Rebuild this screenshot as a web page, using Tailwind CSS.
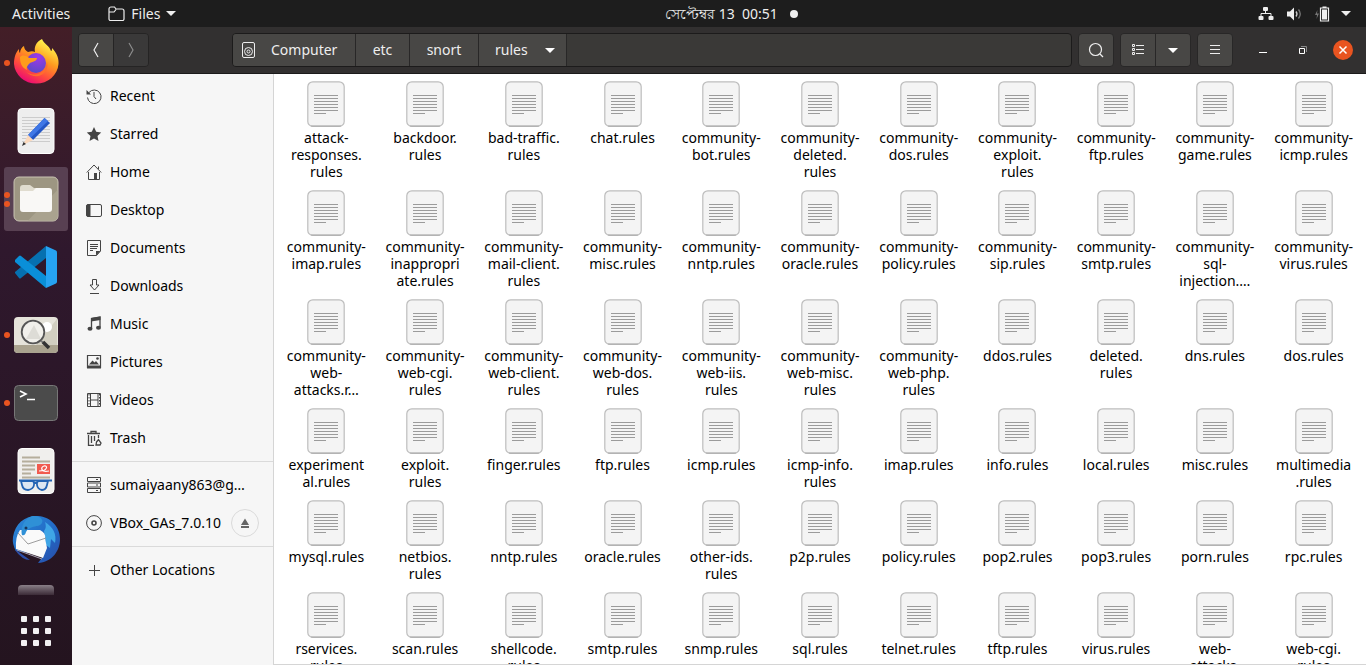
<!DOCTYPE html>
<html lang="en"><head><meta charset="utf-8"><title>Files</title>
<script src="https://cdn.jsdelivr.net/npm/@tailwindcss/browser@4"></script></head>
<body class="flex h-screen flex-col overflow-hidden bg-[#1d1d1d] font-['Noto_Sans',sans-serif] text-sm text-black">
<svg class="hidden">
  <symbol id="doc" viewBox="0 0 38 46"><rect x=".8" y=".8" width="36.4" height="44.6" rx="5" fill="#f4f4f4" stroke="#bdbdbd" stroke-width="1.2"/><path d="M4 45H34" stroke="#a9a9a9" stroke-width="1"/><path d="M7 14.5H31M7 17.5H31M7 20.5H31M7 23.5H31M7 26.5H31M7 29.5H31M7 32.5H19" stroke="#9b9b9b"/></symbol>
</svg>
<header class="flex h-[27px] shrink-0 items-center text-[#eeeeee]">
  <div class="flex flex-1 items-center">
    <button class="ml-3 leading-5">Activities</button>
    <button class="ml-[37px] flex items-center leading-5"><svg class="mr-[6px] size-[18px]" viewBox="0 0 18 18" fill="none" stroke="#eee" stroke-width="1.2"><path d="M2 14V4a2 2 0 0 1 2-2h3.500l1.500 2h6a2 2 0 0 1 2 2v8a1.500 1.500 0 0 1-1.500 1.500h-12A1.500 1.500 0 0 1 2 14ZM2 7h5l2-2.500"/></svg>Files<svg class="ml-[6px] h-[5px] w-[10px]" viewBox="0 0 10 5"><path d="M0 0h10L5 5Z" fill="#eee"/></svg></button>
  </div>
  <button class="ml-[112px] flex items-center leading-5"><span>সেপ্টেম্বর 13&nbsp; 00:51</span><span class="ml-[12px] size-2 rounded-full bg-[#eeeeee]"></span></button>
  <button class="flex flex-1 items-center justify-end pr-[15px]" aria-label="System menu">
    <svg class="mr-3 size-4" viewBox="0 0 16 16" fill="#eee"><rect x="5" y="1" width="5" height="4" rx="1"/><rect x=".5" y="10" width="5" height="4" rx="1"/><rect x="10.500" y="10" width="5" height="4" rx="1"/><path d="M7.500 5v3M3 10V7.500h10V10" fill="none" stroke="#eee"/></svg>
    <svg class="mr-3 size-4" viewBox="0 0 16 16"><path d="M1 5.500h3L8 1.500v13L4 10.500H1Z" fill="#eee"/><path d="M10 5.500q2 2.500 0 5" fill="none" stroke="#ccc" stroke-width="1.300"/><path d="M12.500 3.500q3.500 4.500 0 9" fill="none" stroke="#777" stroke-width="1.300"/></svg>
    <svg class="mr-[11px] size-4" viewBox="0 0 16 16"><path d="M3.500 4 1 9h2l-.5 4L5 7.500H3Z" fill="#777"/><path d="M6.500 2h8v13h-8zM8.500 1h4" fill="none" stroke="#eee" stroke-width="1.200"/><path d="M8 3.500h5v10H8z" fill="#eee"/></svg>
    <svg class="h-[5px] w-[10px]" viewBox="0 0 10 5"><path d="M0 0h10L5 5Z" fill="#eee"/></svg>
  </button>
</header>
<div class="flex min-h-0 flex-1">
  <nav class="flex w-[72px] shrink-0 flex-col items-center gap-1 overflow-hidden bg-linear-to-b from-[#431e27] via-[#2f182d] via-35% to-[#24141f] pt-1" aria-label="Dock">
    <button class="relative grid size-16 shrink-0 place-items-center" aria-label="Firefox"><span class="absolute left-0 size-[6px] rounded-full bg-[#e95420]"></span>
      <svg class="size-12" viewBox="0 0 48 48"><defs><linearGradient id="ff" x1=".8" y1="0" x2=".25" y2="1"><stop offset=".1" stop-color="#fff04a"/><stop offset=".42" stop-color="#ff9a1f"/><stop offset=".7" stop-color="#ff4d3d"/><stop offset="1" stop-color="#e9007c"/></linearGradient><radialGradient id="fp" cx=".6" cy=".2" r=".8"><stop offset="0" stop-color="#a038e8"/><stop offset="1" stop-color="#5b49c8"/></radialGradient></defs><path d="M30 0c2 5 7 6 9 12 1 0 1-2 1-3 5 5 7 11 6.500 16a22.300 21 0 0 1-44.500 0c0-7 2-12 5-15 0 2 0 3 1 4 0-3 2-6 4-7 0 3 2 5 4 6 3-1 5-1 7 0-1-5 1-10 7-13Z" fill="url(#ff)"/><circle cx="24" cy="24" r="10" fill="url(#fp)"/><path d="M8 18c3-3 7-1 9 1h8c0 3-5 4-7 5-2 2-4 4-3 7-6-3-7-8-7-13Z" fill="#ff9c1c"/><path d="M13 32c7 6 20 5 22-9 3 12-11 20-22 9Z" fill="#ff6d2d"/></svg></button>
    <button class="grid size-16 shrink-0 place-items-center" aria-label="Text Editor"><svg class="size-12" viewBox="0 0 48 48"><rect x="6" y="1.500" width="36" height="45" rx="4" fill="#eeeeee" stroke="#fff"/><path d="M10 10.500H38M10 13.500H38M10 16.500H38M10 19.500H38M10 22.500H38M10 25.500H38M10 28.500H38M10 31.500H38M10 34.500H38" stroke="#ccc"/><path d="m16 28 16.500-17 5.500 5-17 17Z" fill="#2457c5"/><path d="m16 28 16.500-17 3.500 3-17.500 17Z" fill="#3f77e6"/><path d="m16 28 5 5-10 5Z" fill="#fbd9bd"/><path d="m11.500 35 2.500 2-4 2Z" fill="#333"/></svg></button>
    <button class="relative grid size-16 shrink-0 place-items-center rounded-[3px] bg-[#584052]" aria-label="Files"><span class="absolute left-0 flex flex-col gap-[3px]"><span class="size-[6px] rounded-full bg-[#e95420]"></span><span class="size-[6px] rounded-full bg-[#e95420]"></span></span><svg class="size-12" viewBox="0 0 48 48"><rect x="2" y="2" width="44" height="44" rx="5" fill="#9d9682" stroke="#c9c3b2"/><path d="M45.500 15v26a4.500 4.500 0 0 1-4.500 4.500H16Z" fill="#aaa38f"/><path d="M8 13q0-3 3-3h7l4 3h8v10H8Z" fill="#e0dccf"/><path d="M8 16h13l3-3h13q3 0 3 3v18q0 3-3 3H11q-3 0-3-3Z" fill="#f9f8f6"/></svg></button>
    <button class="grid size-16 shrink-0 place-items-center" aria-label="Visual Studio Code"><svg class="size-12" viewBox="0 0 48 48"><path d="m3 30 4 5q1 1 2 0L34 15V3L3 29Z" fill="#0670b0"/><path d="m3 17 4-4q1-1 2 0l25 20v12L3 19Z" fill="#0a8fd8"/><path d="m34 3 10 4.500q1 .5 1 2v29q0 1.500-1 2L34 45Z" fill="#26a3f2"/></svg></button>
    <button class="relative grid size-16 shrink-0 place-items-center" aria-label="Image Viewer"><span class="absolute left-0 size-[6px] rounded-full bg-[#e95420]"></span><svg class="size-12" viewBox="0 0 48 48"><rect x="2" y="6" width="44" height="36" rx="4" fill="#e5e3da"/><path d="m24 34 21-26v26Z" fill="#d1cec0"/><circle cx="35" cy="16" r="5" fill="#fff"/><path d="M2 34h44v4a4 4 0 0 1-4 4H6a4 4 0 0 1-4-4Z" fill="#aaa38f"/><circle cx="21" cy="21" r="11.300" fill="#f4f4f0" fill-opacity=".75" stroke="#555" stroke-width="1.800"/><path d="m14 28 8-14 7 14Z" fill="#dddcd6"/><path d="m29 30 3 2" stroke="#777" stroke-width="2"/><path d="m31 31 6 6" stroke="#333" stroke-width="3.500"/></svg></button>
    <button class="relative grid size-16 shrink-0 place-items-center" aria-label="Terminal"><span class="absolute left-0 size-[6px] rounded-full bg-[#e95420]"></span><svg class="size-12" viewBox="0 0 48 48"><rect x="2.500" y="6.500" width="43" height="35" rx="4" fill="#4b4b4b" stroke="#777"/><path d="m8 12 6 3-6 3M15 20.500h8" fill="none" stroke="#fff" stroke-width="1.600"/></svg></button>
    <button class="grid size-16 shrink-0 place-items-center" aria-label="Document Viewer"><svg class="size-12" viewBox="0 0 48 48"><rect x="6" y="1.500" width="36" height="45" rx="4" fill="#f0efed" stroke="#fff"/><path d="M10 10.500h18M10 14.500h28M10 18.500h13M10 22.500h13M10 26.500h9M10 30.500h28" stroke="#b5ae9c" stroke-width="1.800"/><path d="M25 17h13v10H25z" fill="#f15b4f"/><path d="M27 24c9 0 9-6 5-5s-3 7 5 5" fill="none" stroke="#fff" stroke-width="1.200"/><path d="M9 34h11q2.500 0 2 4t-6 5q-5 0-6-5ZM36 34H27q-2.500 0-2 4t5 5q4 0 5-5ZM22 36h3M7 33.500h33" fill="#dce6f2" stroke="#2464b4" stroke-width="1.800"/></svg></button>
    <button class="grid size-16 shrink-0 place-items-center" aria-label="Thunderbird"><svg class="size-12" viewBox="0 0 48 48"><defs><linearGradient id="tb" x1="0" y1="0" x2="1" y2="1"><stop stop-color="#2b8ad8"/><stop offset=".6" stop-color="#2267c4"/><stop offset="1" stop-color="#2a4ba6"/></linearGradient></defs><path d="M1 22C3 8 14 0 26 1c13 1 22 11 22 23S40 47 26 48l6-8L4 36q-4-7-3-14Z" fill="url(#tb)"/><path d="M3 35q7 10 15 10L4 35Z" fill="#2d4faa"/><path d="M33 7c8 5 12 12 10 21l-4-4-1 9-4-3-2-14q3-4 1-9Z" fill="#3fa5e6"/><path d="M8 15 28 15q6 3 5 8l2 10-4 10L4 34q-1-12 4-19Z" fill="#fafafa"/><path d="m6 18 10 11 18-6" fill="none" stroke="#9c9c9c"/><path d="M5 35 30 44" stroke="#a9a4b3"/><path d="M10 20c-2-10 5-19 12-19 8 0 11 6 6 9-4 2-11 1-14 7q-1 4-4 3Z" fill="#2f90d6"/><circle cx="14" cy="13" r="1.500" fill="#17365e"/></svg></button>
    <div class="mt-[10px] h-[10px] w-9 shrink-0 rounded-t-[4px] bg-linear-to-b from-[#8a8088] to-[#3c2c38]"></div>
    <button class="mt-[17px] grid shrink-0 grid-cols-3 gap-[6px]" aria-label="Show Applications"><i class="size-[6px] rounded-[1px] bg-[#f2f0f2]"></i><i class="size-[6px] rounded-[1px] bg-[#f2f0f2]"></i><i class="size-[6px] rounded-[1px] bg-[#f2f0f2]"></i><i class="size-[6px] rounded-[1px] bg-[#f2f0f2]"></i><i class="size-[6px] rounded-[1px] bg-[#f2f0f2]"></i><i class="size-[6px] rounded-[1px] bg-[#f2f0f2]"></i><i class="size-[6px] rounded-[1px] bg-[#f2f0f2]"></i><i class="size-[6px] rounded-[1px] bg-[#f2f0f2]"></i><i class="size-[6px] rounded-[1px] bg-[#f2f0f2]"></i></button>
  </nav>
  <div class="flex min-w-0 flex-1 flex-col">
    <div class="flex h-[47px] shrink-0 items-center border-b border-[#1b1b1b] bg-[#323030] px-[6px] text-[#eeeeee]">
      <div class="flex h-[34px] w-[71px] overflow-hidden rounded-[4px] border border-[#252424]">
        <button class="grid flex-1 place-items-center bg-[#484745]" aria-label="Back"><svg class="size-4" viewBox="0 0 16 16"><path d="M10 1 6 8l4 7" fill="none" stroke="#eee" stroke-width="1.200"/></svg></button>
        <button class="grid flex-1 place-items-center border-l border-[#252424] bg-[#3a3939]" aria-label="Forward"><svg class="size-4" viewBox="0 0 16 16"><path d="m6 1 4 7-4 7" fill="none" stroke="#8b8b8b" stroke-width="1.200"/></svg></button>
      </div>
      <div class="ml-[83px] flex h-[34px] flex-1 overflow-hidden rounded-[4px] border border-[#1c1b1b] bg-[#3a3937]">
        <button class="flex w-[123px] items-center border-r border-[#282727] bg-[#484745] pl-2"><svg class="mr-[14px] size-4" viewBox="0 0 16 16" fill="none" stroke="#eee"><rect x="1.500" y=".5" width="12" height="15" rx="1.500"/><circle cx="7.500" cy="9.500" r="4"/><circle cx="7.500" cy="9.500" r="1.500"/></svg>Computer</button>
        <button class="w-[54px] border-r border-[#282727] bg-[#484745]">etc</button>
        <button class="w-[69px] border-r border-[#282727] bg-[#484745]">snort</button>
        <button class="flex w-[88px] items-center border-r border-[#282727] bg-[#484745] pl-4">rules<svg class="ml-auto mr-[11px] h-[5px] w-[10px]" viewBox="0 0 10 5"><path d="M0 0h10L5 5Z" fill="#fff"/></svg></button>
      </div>
      <button class="ml-[6px] grid h-[34px] w-9 place-items-center rounded-[4px] border border-[#282727] bg-[#484745]" aria-label="Search"><svg class="size-4" viewBox="0 0 16 16" fill="none" stroke="#eee" stroke-width="1.200"><circle cx="7.500" cy="7.500" r="6"/><path d="m12 12 3 3"/></svg></button>
      <div class="ml-[6px] flex h-[34px] w-[71px] overflow-hidden rounded-[4px] border border-[#282727]">
        <button class="grid flex-1 place-items-center bg-[#484745]" aria-label="List view"><svg class="size-4" viewBox="0 0 16 16" fill="none" stroke="#eee"><path d="M2.500 2.500h2v2h-2zM2.500 6.500h2v2h-2zM2.500 10.500h2v2h-2zM6 3.500h8M6 7.500h8M6 11.500h8"/></svg></button>
        <button class="grid flex-1 place-items-center border-l border-[#282727] bg-[#484745]" aria-label="View options"><svg class="h-[5px] w-[10px]" viewBox="0 0 10 5"><path d="M0 0h10L5 5Z" fill="#fff"/></svg></button>
      </div>
      <button class="ml-[6px] grid h-[34px] w-9 place-items-center rounded-[4px] border border-[#282727] bg-[#484745]" aria-label="Menu"><svg class="size-4" viewBox="0 0 16 16" stroke="#eee"><path d="M3 3.500h10M3 7.500h10M3 11.500h10"/></svg></button>
      <button class="ml-5 grid size-5 place-items-center" aria-label="Minimize"><svg class="size-4" viewBox="0 0 16 16"><path d="M4 10.500h8" stroke="#fff"/></svg></button>
      <button class="ml-5 grid size-5 place-items-center" aria-label="Restore"><svg class="size-4" viewBox="0 0 16 16" fill="none"><path d="M6 4.500h5.500V10" stroke="#888"/><path d="M4.500 6.500h5v5h-5z" stroke="#fff"/></svg></button>
      <button class="ml-5 mr-[7px] grid size-5 place-items-center rounded-full bg-[#e95420]" aria-label="Close"><svg class="size-4" viewBox="0 0 16 16"><path d="m4.500 4.500 7 7M11.500 4.500l-7 7" stroke="#fff" stroke-width="1.500"/></svg></button>
    </div>
    <div class="flex min-h-0 flex-1">
      <aside class="w-[202px] shrink-0 border-r border-[#d5d5d5] bg-[#f6f6f6] pt-[3px]">
        <ul id="places"></ul>
      </aside>
      <main class="min-w-0 flex-1 overflow-hidden border-b border-[#d5d5d5] bg-white">
        <ul id="files" class="grid grid-cols-11 px-[3px] pt-[7px]"></ul>
      </main>
    </div>
  </div>
</div>
<script>
const icons = {
Recent:'<path d="M3 4.500a6.800 6.800 0 1 1-1.500 5M8 4v4.500l2 2.500"/><path d="M.5 2v4.500H5Z" fill="#444" stroke="none"/>',
Starred:'<path d="m8 1 2.200 4.800 5 .6-3.700 3.500 1 5.100L8 12.500 3.500 15l1-5.100L.8 6.400l5-.6Z" fill="#444" stroke="none"/>',
Home:'<path d="M.8 8.500 8 1l7.200 7.500M2.500 8v7.500h11V8M12.500 2.500V5"/><path d="M8 9h3v6H8z" fill="#444" stroke="none"/>',
Desktop:'<rect x=".5" y="2.500" width="15" height="12" rx="1.500"/><path d="M1 3h3v11H1z" fill="#444"/>',
Documents:'<path d="M1.500.5h13V11l-4 4.500h-9ZM4 4.500h8M4 6.500h8M4 8.500h7M4 10.500h3"/><path d="M10 11h4.500L10 15.500Z" fill="#444" stroke="none"/>',
Downloads:'<path d="M6.500 1.500h4V7h2.500l-4.500 5-4.500-5h2.500ZM4 15.500h9"/>',
Music:'<path d="M5.500 12V2.500L14 1v10" stroke-width="1.300"/><path d="M5 2l9.500-1.500V4L5 5.500Z" fill="#444" stroke="none"/><ellipse cx="4" cy="12.800" rx="2.500" ry="2" fill="#444" stroke="none"/><ellipse cx="12.500" cy="11.800" rx="2.500" ry="2" fill="#444" stroke="none"/>',
Pictures:'<path d="M1.500 1.500h13v12h-13zM1.500 13h13" stroke-width="1.200"/><path d="M1 11.500h14v3H1zM3 10.500l3.500-4 2 2 1.500-1.500 3 3.500Z" fill="#444" stroke="none"/><circle cx="11.500" cy="4.500" r="1.300" fill="#444" stroke="none"/>',
Videos:'<path d="M1.500 1.500h13v13h-13zM4.500 1.500v13M12 1.500v13M4.500 8H12"/><path d="M3 2v12M13.500 2v12" stroke-dasharray="1.500 1.500"/>',
Trash:'<path d="M1 3.500h13M5 3V1.500h5V3M2.500 5v10.500H8M5.500 6v7M8.500 6v5M12.500 5v3M10.500 12l2-2.500 2.500 3.500-1 2h-4Z" stroke-width="1.300"/>',
Server:'<path d="M1.500.5h13v4h-13zM1.500 6h13v4h-13zM1.500 11.500h13v4h-13zM10 2.500h2M10 8h2M10 13.500h2"/>',
Disc:'<circle cx="8" cy="8" r="7.400"/><circle cx="8" cy="8" r="2" stroke-width="1.600"/>',
Plus:'<path d="M8.500 3v11M3 8.500h11"/>'
};
const rowCls = 'flex h-[38px] items-center pl-[14px]';
const row = (label, icon) => `<li class="${rowCls}"><a href="#" class="flex items-center gap-2"><svg class="size-4 shrink-0" viewBox="0 0 16 16" fill="none" stroke="#444">${icons[icon||label]}</svg>${label}</a></li>`;
const eject = '<button class="ml-auto mr-[14px] grid size-7 place-items-center rounded-full border border-[#dadada]" aria-label="Eject"><svg class="size-4" viewBox="0 0 16 16" fill="#666"><path d="m8 3.500 4 6.500H4ZM4 11h8v2H4z"/></svg></button>';
document.getElementById('places').innerHTML =
 ['Recent','Starred','Home','Desktop','Documents','Downloads','Music','Pictures','Videos','Trash'].map(n=>row(n)).join('')
 + '<li class="mt-1 mb-1 border-t border-[#dadada]"></li>' + row('sumaiyaany863@g…','Server') + row('VBox_GAs_7.0.10','Disc').replace('</a>','</a>'+eject)
 + '<li class="mt-1 mb-1 border-t border-[#dadada]"></li>' + row('Other Locations','Plus');
const files = `attack-|responses.|rules
backdoor.|rules
bad-traffic.|rules
chat.rules
community-|bot.rules
community-|deleted.|rules
community-|dos.rules
community-|exploit.|rules
community-|ftp.rules
community-|game.rules
community-|icmp.rules
community-|imap.rules
community-|inappropri|ate.rules
community-|mail-client.|rules
community-|misc.rules
community-|nntp.rules
community-|oracle.rules
community-|policy.rules
community-|sip.rules
community-|smtp.rules
community-|sql-|injection.…
community-|virus.rules
community-|web-|attacks.r…
community-|web-cgi.|rules
community-|web-client.|rules
community-|web-dos.|rules
community-|web-iis.|rules
community-|web-misc.|rules
community-|web-php.|rules
ddos.rules
deleted.|rules
dns.rules
dos.rules
experiment|al.rules
exploit.|rules
finger.rules
ftp.rules
icmp.rules
icmp-info.|rules
imap.rules
info.rules
local.rules
misc.rules
multimedia|.rules
mysql.rules
netbios.|rules
nntp.rules
oracle.rules
other-ids.|rules
p2p.rules
policy.rules
pop2.rules
pop3.rules
porn.rules
rpc.rules
rservices.|rules
scan.rules
shellcode.|rules
smtp.rules
snmp.rules
sql.rules
telnet.rules
tftp.rules
virus.rules
web-|attacks.|rules
web-cgi.|rules`.split('\n');
document.getElementById('files').innerHTML = files.map(f=>`<li class="flex flex-col items-center pb-[10px] text-center leading-[17px] whitespace-nowrap"><svg class="mb-[2px] h-[46px] w-[38px]" viewBox="0 0 38 46"><use href="#doc"/></svg><span>${f.replaceAll('|','<br>')}</span></li>`).join('');
</script>
</body></html>
